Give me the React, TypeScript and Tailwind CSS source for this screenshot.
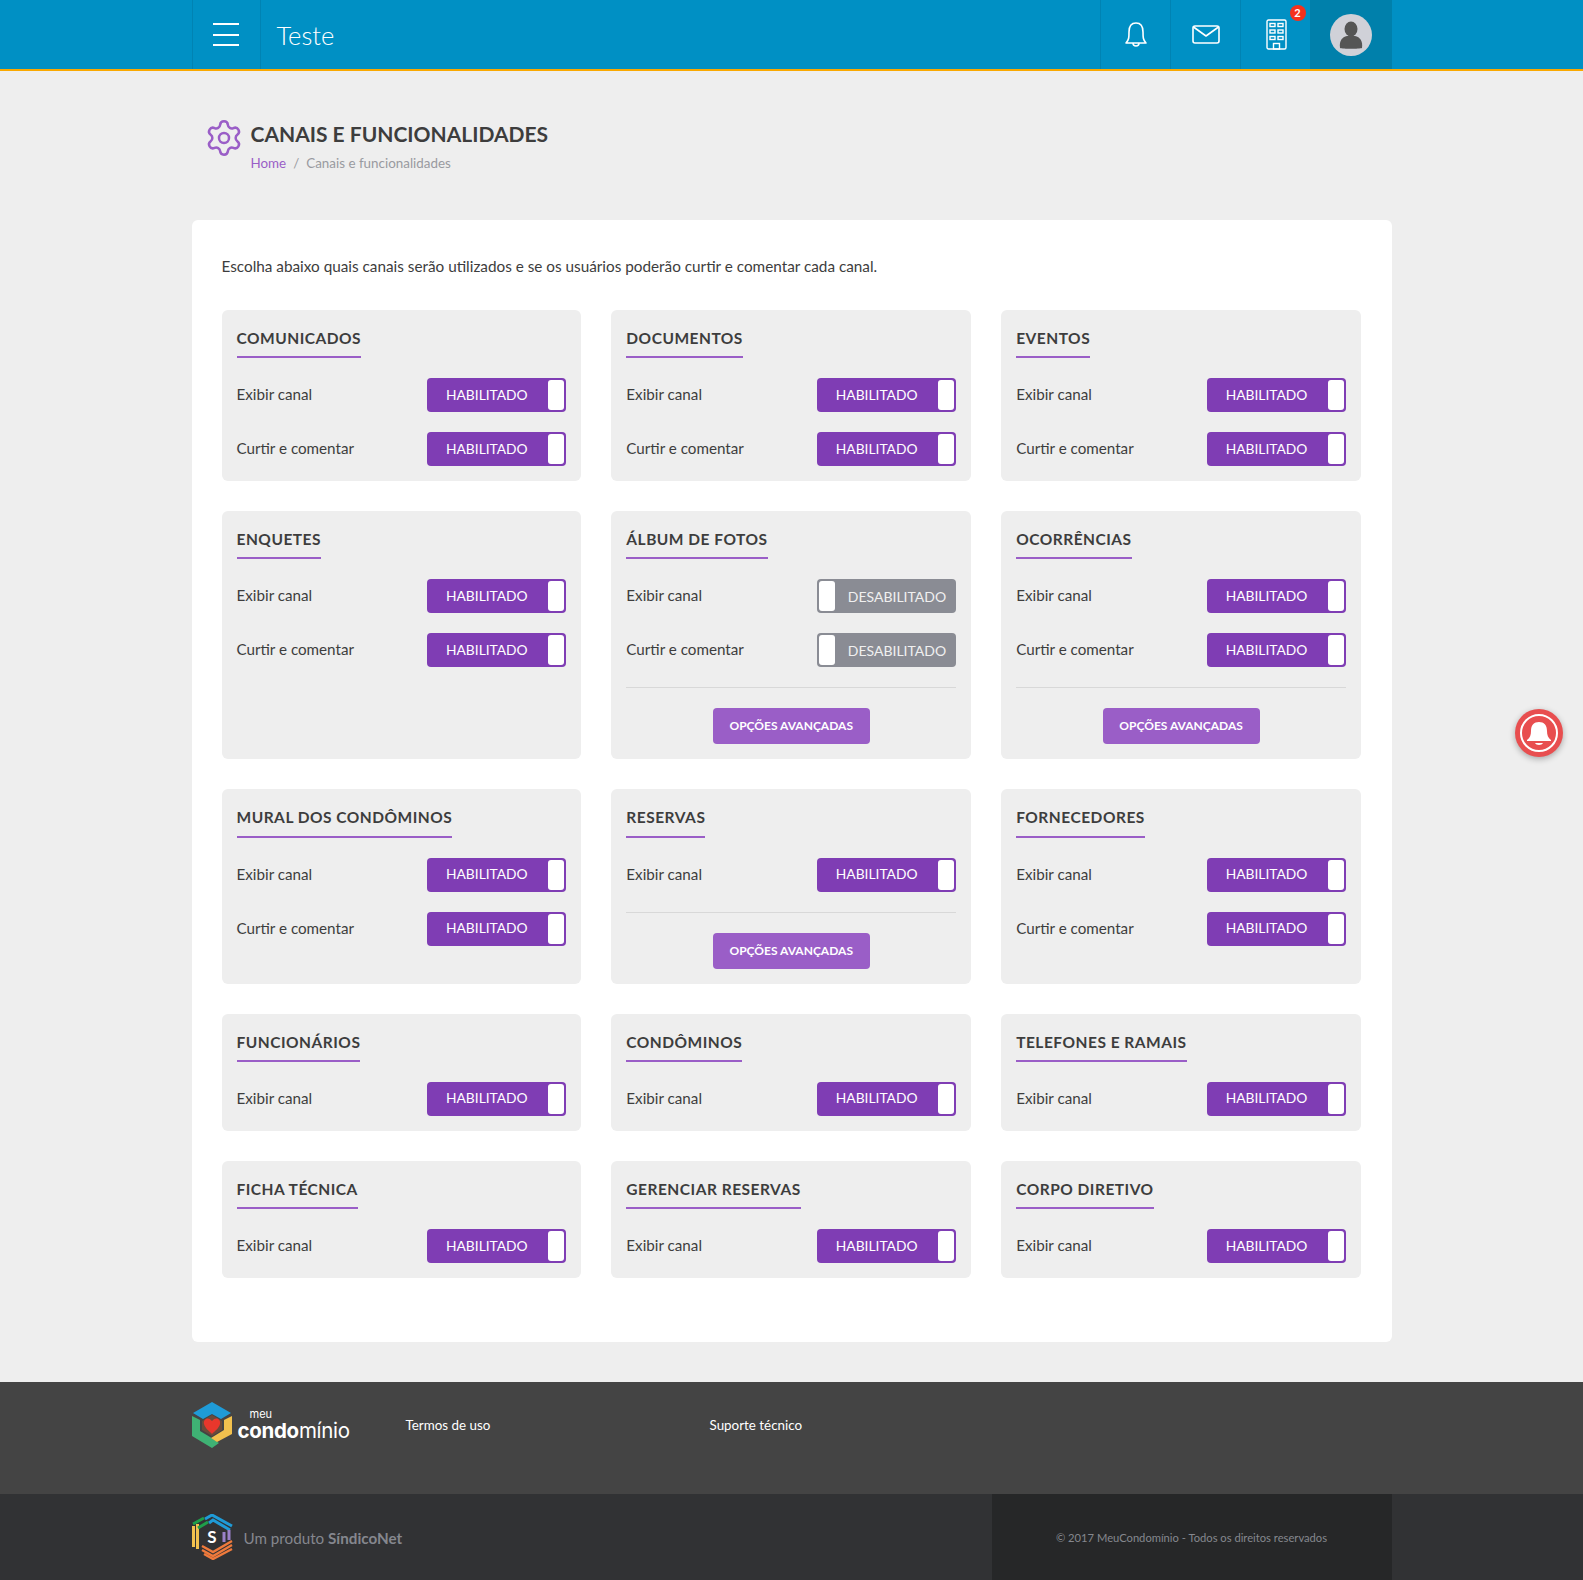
import { Settings } from "lucide-react";

type Channel = {
  title: string;
  rows: { label: string; on: boolean }[];
  advanced?: boolean;
};

const show = { label: "Exibir canal", on: true };
const like = { label: "Curtir e comentar", on: true };

const channels: Channel[] = [
  { title: "COMUNICADOS", rows: [show, like] },
  { title: "DOCUMENTOS", rows: [show, like] },
  { title: "EVENTOS", rows: [show, like] },
  { title: "ENQUETES", rows: [show, like] },
  {
    title: "ÁLBUM DE FOTOS",
    rows: [
      { label: "Exibir canal", on: false },
      { label: "Curtir e comentar", on: false },
    ],
    advanced: true,
  },
  { title: "OCORRÊNCIAS", rows: [show, like], advanced: true },
  { title: "MURAL DOS CONDÔMINOS", rows: [show, like] },
  { title: "RESERVAS", rows: [show], advanced: true },
  { title: "FORNECEDORES", rows: [show, like] },
  { title: "FUNCIONÁRIOS", rows: [show] },
  { title: "CONDÔMINOS", rows: [show] },
  { title: "TELEFONES E RAMAIS", rows: [show] },
  { title: "FICHA TÉCNICA", rows: [show] },
  { title: "GERENCIAR RESERVAS", rows: [show] },
  { title: "CORPO DIRETIVO", rows: [show] },
];

function Toggle({ on }: { on: boolean }) {
  if (on) {
    return (
      <div className="flex h-[34px] w-[139px] items-stretch rounded bg-[#7f3db4] p-[2px] text-white">
        <span className="flex flex-1 items-center justify-center pr-[4px] text-[13.8px]">HABILITADO</span>
        <span className="w-[16px] rounded-[3px] bg-white" />
      </div>
    );
  }
  return (
    <div className="flex h-[34px] w-[139px] items-stretch rounded bg-[#8a8c94] p-[2px] text-[#f0f0f0]">
      <span className="w-[16px] rounded-[3px] bg-white" />
      <span className="flex flex-1 items-center justify-end pr-[8px] text-[14px]">DESABILITADO</span>
    </div>
  );
}

function ChannelCard({ channel }: { channel: Channel }) {
  return (
    <div className="rounded-md bg-[#eeeeee] p-[15px]">
      <div className="flex">
        <h3 className="h-[33.2px] border-b-2 border-[#9a5ec7] text-[15.5px] leading-[27px] font-bold tracking-[0.5px] text-[#3d3d3d]">
          {channel.title}
        </h3>
      </div>
      <div className="mt-[20px] flex flex-col gap-[20px]">
        {channel.rows.map((r) => (
          <div key={r.label} className="flex items-center justify-between">
            <span className="pb-[1px] text-[15.2px] text-[#3d3d3d]">{r.label}</span>
            <Toggle on={r.on} />
          </div>
        ))}
      </div>
      {channel.advanced && (
        <div className="mt-[20px] flex justify-center border-t border-[#d8d8d8] pt-[20px]">
          <button className="h-[36px] w-[157px] rounded bg-[#9a5ec7] text-[12px] font-bold text-white">
            OPÇÕES AVANÇADAS
          </button>
        </div>
      )}
    </div>
  );
}

function MeuLogo() {
  return (
    <svg width="40" height="46" viewBox="0 0 40 46">
      <path d="M20 0 L39 11 L29 17 L20 12 L11 17 L1 11 Z" fill="#1f9bd7" />
      <path d="M0 14 L8 18 L8 29 L18 35 L27 41 L20 46 L0 34 Z" fill="#3fb274" />
      <path d="M40 14 L40 32 L25 40 L19 36 L32 28 L32 18 Z" fill="#f2c14e" />
      <path d="M20 13 L30 19 L30 28 L20 34 L10 28 L10 19 Z" fill="#6b4a3a" />
      <path d="M20 19 C16 14 11 17 12 22 C13 26 17 29 20 32 C23 29 27 26 28 22 C29 17 24 14 20 19 Z" fill="#e8372c" />
    </svg>
  );
}

function ProductLogo() {
  return (
    <svg width="41" height="46" viewBox="0 0 41 46">
      <path d="M1.5 12 L1.5 33 M5.5 10 L5.5 35" stroke="#f2c14e" strokeWidth="3" fill="none" />
      <path d="M1 10 L12 4 M6 14 L16 8" stroke="#1f9e4a" strokeWidth="3" fill="none" />
      <path d="M13 5 L20 1 L40 12 M17 9 L21 6 L38 16" stroke="#1f9bd7" strokeWidth="3" fill="none" />
      <path d="M32 18 L32 28 M37 16 L37 26" stroke="#9b82c9" strokeWidth="3" fill="none" />
      <path d="M10 32 L21 38 L40 27 M10 36 L21 42 L40 31 M12 40 L21 45 L40 35" stroke="#ef7a3c" strokeWidth="2.4" fill="none" />
      <text x="20" y="29" textAnchor="middle" fontSize="17" fontWeight="700" fill="#ffffff" fontFamily="Lato, sans-serif">
        S
      </text>
    </svg>
  );
}

export default function App() {
  return (
    <div className="relative min-h-[1580px] bg-[#eeeeee] font-['Lato','Noto_Sans',sans-serif] text-[#3d3d3d]">
      {/* HEADER */}
      <header className="h-[71px] border-b-2 border-[#f9a800] bg-[#0090c4]">
        <div className="mx-auto flex h-[69px] w-[1200px] items-stretch text-white">
          <div className="flex w-[69px] items-center justify-center border-x border-[#0083b3]">
            <div className="flex h-[23px] w-[26px] flex-col justify-between">
              <span className="h-[2px] bg-white" />
              <span className="h-[2px] bg-white" />
              <span className="h-[2px] bg-white" />
            </div>
          </div>
          <div className="flex flex-1 items-center pt-[2px] pl-[16px] text-[25.5px] font-light">Teste</div>
          <div className="flex w-[70px] items-center justify-center border-l border-[#0083b3] pl-[2px]">
            <svg width="24" height="28" viewBox="0 0 24 28" fill="none" stroke="white" strokeWidth="1.6" strokeLinejoin="round">
              <path d="M2 22 C5 19 5 16 5 11 C5 5 8 2 12 2 C16 2 19 5 19 11 C19 16 19 19 22 22 Z" />
              <path d="M9 22 C9 26 15 26 15 22" />
            </svg>
          </div>
          <div className="flex w-[70px] items-center justify-center border-l border-[#0083b3] pl-[2px]">
            <svg width="28" height="20" viewBox="0 0 28 20" fill="none" stroke="white" strokeWidth="1.6" strokeLinejoin="round">
              <rect x="1" y="1" width="26" height="17" rx="2" />
              <path d="M1.5 2 L14 11 L26.5 2" />
            </svg>
          </div>
          <div className="relative flex w-[70px] items-center justify-center border-l border-[#0083b3] pl-[3px]">
            <svg width="22" height="31" viewBox="0 0 22 31" fill="none" stroke="white" strokeWidth="1.4">
              <rect x="1" y="1" width="19" height="29" rx="1.5" />
              <rect x="4" y="4.5" width="5" height="3" />
              <rect x="12" y="4.5" width="5" height="3" />
              <rect x="4" y="11" width="5" height="3" />
              <rect x="12" y="11" width="5" height="3" />
              <rect x="4" y="17.5" width="5" height="3" />
              <rect x="12" y="17.5" width="5" height="3" />
              <rect x="7.5" y="24.5" width="6" height="5.5" />
            </svg>
            <span className="absolute top-[5px] left-[49px] flex h-[16px] w-[16px] items-center justify-center rounded-full bg-[#f5311c] text-[11px] font-bold text-white">
              2
            </span>
          </div>
          <div className="flex w-[82px] items-center justify-center bg-[#0080ab]">
            <div className="flex h-[42px] w-[42px] items-center justify-center rounded-full bg-[#d0d1d8]">
              <svg width="24" height="28" viewBox="0 0 24 28" fill="#555555">
                <ellipse cx="12" cy="8" rx="6.5" ry="7.5" />
                <path d="M1 27 C0 20 3 16 8 15 L16 15 C21 16 24 20 23 27 C20 28 4 28 1 27 Z" />
              </svg>
            </div>
          </div>
        </div>
      </header>

      <main className="mx-auto w-[1200px]">
        {/* PAGE TITLE */}
        <div className="flex h-[149px] items-start pt-[46px] pl-[12px]">
          <Settings size={40} strokeWidth={1.5} className="mt-[1px] text-[#9a5ec7]" />
          <div className="ml-[7px]">
            <h1 className="text-[21px] leading-[34px] font-bold text-[#3d3d3d]">CANAIS E FUNCIONALIDADES</h1>
            <p className="mt-[2px] text-[13.4px] leading-[20px] text-[#999aa0]">
              <span className="text-[#9a5ec7]">Home</span>
              <span className="mx-[7px]">/</span>
              Canais e funcionalidades
            </p>
          </div>
        </div>

        {/* PANEL */}
        <section className="rounded-md bg-white pt-[34px] pr-[30.5px] pb-[64px] pl-[30px]">
          <p className="mb-[32px] text-[15.3px] leading-[24px] text-[#3d3d3d]">
            Escolha abaixo quais canais serão utilizados e se os usuários poderão curtir e comentar cada canal.
          </p>
          <div className="grid grid-cols-3 gap-[30px]">
            {channels.map((c) => (
              <ChannelCard key={c.title} channel={c} />
            ))}
          </div>
        </section>
      </main>

      {/* FOOTER */}
      <footer className="mt-[40px]">
        <div className="h-[112px] bg-[#444444]">
          <div className="mx-auto flex w-[1200px] items-start pt-[20px] text-[13.4px] text-white">
            <div className="flex w-[214px] items-center gap-[6px]">
              <MeuLogo />
              <div className="flex flex-col pt-[3px] font-['Inter',sans-serif]">
                <span className="pl-[12px] text-[11px] leading-[10px]">meu</span>
                <span className="text-[20.5px] leading-[24px] tracking-[-0.3px]">
                  <span className="font-bold">condo</span>
                  <span className="font-normal">mínio</span>
                </span>
              </div>
            </div>
            <a className="mt-[13px] w-[304px]">Termos de uso</a>
            <a className="mt-[13px]">Suporte técnico</a>
          </div>
        </div>
        <div className="h-[86px] bg-[#313234]">
          <div className="mx-auto flex h-full w-[1200px] items-stretch">
            <div className="flex w-[800px] items-center gap-[11px]">
              <ProductLogo />
              <span className="pt-[2px] text-[15.2px] text-[#85878e]">
                Um produto <b className="font-bold">SíndicoNet</b>
              </span>
            </div>
            <div className="flex w-[400px] items-center justify-center bg-[#262728] pt-[3px] text-[11.2px] text-[#85878e]">
              © 2017 MeuCondomínio - Todos os direitos reservados
            </div>
          </div>
        </div>
      </footer>

      {/* FLOATING BELL */}
      <div className="absolute top-[709px] left-[1515px] flex h-[48px] w-[48px] items-center justify-center rounded-full bg-[#e84e4f] shadow-[0_2px_6px_rgba(0,0,0,0.3)]">
        <div className="flex h-[38px] w-[38px] items-center justify-center rounded-full border-2 border-white">
          <svg width="26" height="26" viewBox="0 0 26 26" fill="white">
            <path d="M1 20 C4 18 5 15 5 11 C5 5 8 2 13 2 C18 2 21 5 21 11 C21 15 22 18 25 20 L25 21 L1 21 Z" />
            <path d="M9 23 L17 23 C16 25.5 10 25.5 9 23 Z" />
          </svg>
        </div>
      </div>
    </div>
  );
}
